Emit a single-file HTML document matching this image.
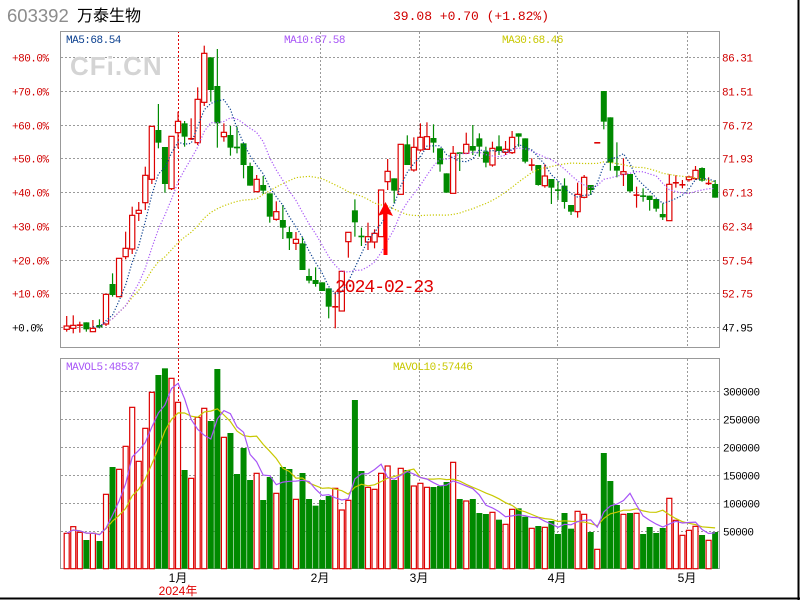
<!DOCTYPE html>
<html><head><meta charset="utf-8"><style>
html,body{margin:0;padding:0;background:#fff;}
body{width:800px;height:600px;overflow:hidden;position:relative;}
svg{position:absolute;left:0;top:0;}
</style></head><body>
<svg id="s" width="800" height="600" xmlns="http://www.w3.org/2000/svg" font-family="'Liberation Mono', monospace">
<rect x="0" y="0" width="800" height="600" fill="#fff"/>
<line x1="798.5" y1="0" x2="798.5" y2="600" stroke="#000" stroke-width="2"/>
<line x1="0" y1="598.5" x2="800" y2="598.5" stroke="#000" stroke-width="2"/>
<text x="7" y="22" font-family="'Liberation Sans',sans-serif" font-size="18.5" fill="#8c8c8c">603392</text>
<text x="77" y="21" font-family="'Liberation Sans','Noto Sans CJK SC',sans-serif" font-size="16" fill="#000">万泰生物</text>
<text x="393" y="20" font-size="13" fill="#d00000">39.08 +0.70 (+1.82%)</text>
<g id="grid"></g>
<text x="70" y="75" font-family="'Liberation Sans',sans-serif" font-weight="bold" font-size="26" fill="#d4d4d4" letter-spacing="1">CFi.CN</text>
<rect x="60.5" y="31.5" width="659" height="316" fill="none" stroke="#999"/>
<rect x="60.5" y="358.5" width="659" height="210" fill="none" stroke="#999"/>
<g id="chart"></g>
<g font-size="11" letter-spacing="-0.5">
<text x="66" y="43" fill="#0a3f8f">MA5:68.54</text>
<text x="284" y="43" fill="#a855f7">MA10:67.58</text>
<text x="502" y="43" fill="#c8c800">MA30:68.46</text>
<text x="66" y="370" fill="#a855f7">MAVOL5:48537</text>
<text x="393" y="370" fill="#c8c800">MAVOL10:57446</text>
</g>
<g id="labels" font-size="11" letter-spacing="-0.5"></g>
<text x="335" y="292" font-size="18" letter-spacing="-1" fill="#e00000">2024-02-23</text>
<polygon points="385.5,202 378,216 383.5,214 383.5,255 387.5,255 387.5,214 393,216" fill="#f00"/>
<g font-family="'Liberation Sans','Noto Sans CJK SC',sans-serif" font-size="12" fill="#000" text-anchor="middle">
<text x="178" y="582">1月</text>
<text x="320" y="582">2月</text>
<text x="419" y="582">3月</text>
<text x="557" y="582">4月</text>
<text x="687" y="582">5月</text>
<text x="178" y="595" fill="#e00000">2024年</text>
</g>
</svg>
<script>
var NS="http://www.w3.org/2000/svg";
function el(p,t,a){var e=document.createElementNS(NS,t);for(var k in a)e.setAttribute(k,a[k]);p.appendChild(e);return e;}
var grid=document.getElementById('grid'),ch=document.getElementById('chart'),lb=document.getElementById('labels');
var hy=[57.5,91.5,125.5,158.5,192.5,226.5,260.5,293.5,327.5];
var pl=['+80.0%','+70.0%','+60.0%','+50.0%','+40.0%','+30.0%','+20.0%','+10.0%','+0.0%'];
var pr=['86.31','81.51','76.72','71.93','67.13','62.34','57.54','52.75','47.95'];
hy.forEach(function(y,i){el(grid,'line',{x1:61,x2:719,y1:y,y2:y,stroke:'#9a9a9a','stroke-dasharray':'2,2'});
 var t=el(lb,'text',{x:12,y:y+4,fill:i==8?'#000':'#d00000'});t.textContent=pl[i];
 var t2=el(lb,'text',{x:722,y:y+4,fill:i==8?'#000':'#d00000'});t2.textContent=pr[i];});
var vy=[391.5,419.5,447.5,475.5,503.5,531.5];var vl=['300000','250000','200000','150000','100000','50000'];
vy.forEach(function(y,i){el(grid,'line',{x1:61,x2:719,y1:y,y2:y,stroke:'#9a9a9a','stroke-dasharray':'2,2'});
 var t=el(lb,'text',{x:723,y:y+4,fill:'#000'});t.textContent=vl[i];});
[320.5,419.5,557.5,687.5].forEach(function(x){
 el(grid,'line',{x1:x,x2:x,y1:32,y2:347,stroke:'#9a9a9a','stroke-dasharray':'2,2'});
 el(grid,'line',{x1:x,x2:x,y1:359,y2:568,stroke:'#9a9a9a','stroke-dasharray':'2,2'});});
el(grid,'line',{x1:178.5,x2:178.5,y1:31,y2:570,stroke:'#e00000','stroke-dasharray':'2,2'});
// candles: bodyTop, bodyBot, wickTop, wickBot, color (zoomed coords, y=30+z/3)
var C=[[888,898,858,905,'r'],[886,895,856,910,'r'],[883,886,875,908,'r'],[877,898,877,905,'g'],[895,905,870,905,'r'],[885,892,868,895,'g'],[793,882,793,888,'r'],[762,795,730,800,'g'],[685,800,685,800,'r'],[655,680,605,688,'r'],
[556,657,530,672,'r'],[541,550,516,573,'r'],[436,518,410,540,'r'],[289,448,289,462,'r'],[300,338,222,355,'g'],[351,462,351,488,'g'],[319,476,319,480,'r'],[274,308,245,355,'r'],[280,320,273,350,'g'],[324,329,265,330,'r'],
[208,338,172,345,'r'],[70,217,47,228,'r'],[82,180,82,215,'g'],[168,280,57,353,'g'],[307,320,280,335,'r'],[315,353,288,377,'g'],[350,355,290,370,'g'],[340,405,340,445,'g'],[408,467,398,467,'g'],[448,485,435,487,'r'],
[465,482,438,492,'g'],[490,560,490,578,'g'],[545,568,514,572,'r'],[570,593,525,627,'g'],[606,625,590,660,'g'],[628,640,606,660,'r'],[640,720,622,720,'g'],[738,752,716,760,'g'],[750,762,712,770,'g'],[757,783,757,783,'g'],
[775,830,775,865,'g'],[828,832,785,895,'r'],[724,843,724,843,'r'],[607,635,607,683,'r'],[541,577,508,620,'g'],[617,620,593,648,'g'],[620,636,578,660,'r'],[610,636,598,655,'r'],[480,620,480,620,'r'],[424,455,387,480,'r'],
[445,482,445,520,'g'],[343,493,343,493,'r'],[343,405,316,405,'g'],[352,420,322,425,'r'],[322,360,280,365,'r'],[320,358,277,358,'r'],[324,338,283,368,'g'],[355,403,355,425,'g'],[430,488,430,488,'g'],[370,490,348,490,'r'],
[367,370,367,423,'g'],[343,370,308,372,'r'],[348,362,285,375,'g'],[325,350,310,380,'g'],[365,398,350,412,'g'],[355,405,335,410,'r'],[349,363,316,375,'g'],[358,367,333,375,'r'],[322,368,303,372,'r'],[310,320,310,350,'g'],
[325,395,325,400,'g'],[403,406,385,422,'r'],[405,465,405,467,'g'],[438,467,403,473,'r'],[447,473,447,522,'g'],[478,480,455,510,'g'],[467,516,445,536,'g'],[525,545,525,555,'g'],[493,545,458,563,'r'],[442,502,435,505,'r'],
[465,480,465,495,'g'],[336,338,336,338,'r'],[183,275,183,298,'g'],[262,398,262,422,'g'],[408,422,337,442,'g'],[425,433,385,468,'r'],[432,484,432,487,'g'],[493,495,470,533,'r'],[496,498,475,515,'g'],[497,510,497,542,'g'],
[507,536,507,545,'g'],[552,562,520,570,'g'],[463,572,433,572,'r'],[456,460,436,473,'r'],[462,465,450,475,'r'],[441,449,437,455,'r'],[421,446,408,450,'r'],[414,452,412,455,'g'],[458,460,442,465,'r'],[462,503,450,503,'g']];
// volume tops (screen y)
var z2=[580,560,577,600,580,603,463,381,388,319,202,364,265,157,105,85,115,187,390,415,232,205,243,87,292,279,402,324,420,400,480,411,460,381,387,478,399,477,497];
var z6=[435,423,400,465,436,135,348,397,403,355,333,375,340,345,393,385,397,396,393,381,322,432,438,432,474,477,472,494,508];
var z7=[463,460,485,520,513,517,498,537,474,521,469,478,531,583,294,378,450,478,474,475,537,516,534,519,430,496,541,526,514,540,556,531];
var V=[];z2.forEach(function(z){V.push(340+z/3);});z6.forEach(function(z){V.push(355+z/3);});z7.forEach(function(z){V.push(355+z/3);});
var RED='#dd0000',GRN='#008a00';
var X=function(i){return 66.7+6.55*i;};
var VB=568.7;
V.forEach(function(t,i){var x=X(i),c=C[i][4];
 if(c=='r')el(ch,'rect',{x:x-2.5,y:t,width:5,height:VB-t,fill:'#fff',stroke:RED,'stroke-width':1.2});
 else el(ch,'rect',{x:x-3,y:t,width:6,height:VB-t,fill:GRN});});
var close=[];
C.forEach(function(d,i){var x=X(i),bt=30+d[0]/3,bb=30+d[1]/3,wt=30+d[2]/3,wb=30+d[3]/3,col=d[4]=='r'?RED:GRN;
 close.push(d[4]=='r'?bt:bb);
 el(ch,'line',{x1:x,x2:x,y1:wt,y2:wb,stroke:col,'stroke-width':1.2});
 var h=Math.max(bb-bt,1);
 if(d[4]=='r'){ if(h<2.5) el(ch,'rect',{x:x-3,y:bt,width:6,height:1.6,fill:RED});
  else el(ch,'rect',{x:x-2.6,y:bt,width:5.2,height:h,fill:'#fff',stroke:RED,'stroke-width':1.2});}
 else el(ch,'rect',{x:x-3,y:bt,width:6,height:Math.max(h,1.6),fill:GRN});});
function ma(arr,n,start){var pts=[];for(var i=start;i<arr.length;i++){var s=0,c=0;for(var j=Math.max(0,i-n+1);j<=i;j++){s+=arr[j];c++;}pts.push(X(i).toFixed(1)+','+(s/c).toFixed(1));}return pts.join(' ');}
el(ch,'polyline',{points:ma(close,30,5),fill:'none',stroke:'#c8c800','stroke-width':1.2,'stroke-dasharray':'1.2,1.8'});
el(ch,'polyline',{points:ma(close,10,5),fill:'none',stroke:'#a855f7','stroke-width':1.2,'stroke-dasharray':'1.2,1.8'});
el(ch,'polyline',{points:ma(close,5,4),fill:'none',stroke:'#0a3f8f','stroke-width':1.2,'stroke-dasharray':'1.2,1.8'});
el(ch,'polyline',{points:ma(V,10,0),fill:'none',stroke:'#c8c800','stroke-width':1.2});
el(ch,'polyline',{points:ma(V,5,0),fill:'none',stroke:'#a855f7','stroke-width':1.2});
</script>
</body></html>
